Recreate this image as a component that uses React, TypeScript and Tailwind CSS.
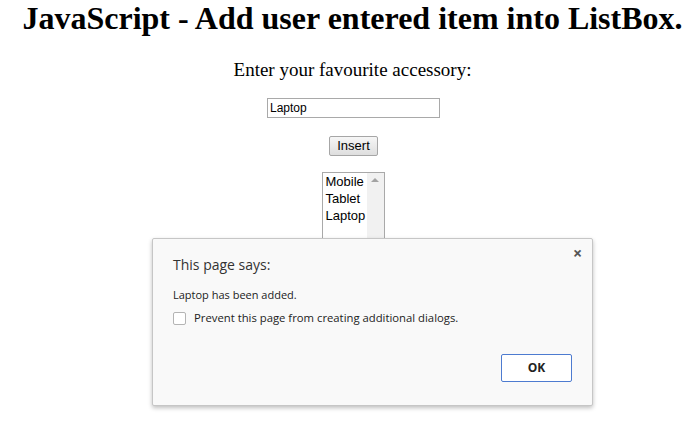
import React from "react";

export default function App() {
  return (
    <div className="relative w-[691px] h-[423px] bg-white overflow-hidden">
      <div className="flex flex-col items-center pl-[14px]">
        <h1
          className="mt-[2px] h-[32px] leading-[32px] text-[32px] font-bold text-black whitespace-nowrap"
          style={{ fontFamily: '"Liberation Serif", "Times New Roman", serif' }}
        >
          JavaScript - Add user entered item into ListBox.
        </h1>
        <p
          className="mt-[25px] h-[22px] leading-[22px] text-[19px] text-black whitespace-nowrap"
          style={{ fontFamily: '"Liberation Serif", "Times New Roman", serif' }}
        >
          Enter your favourite accessory:
        </p>
        <div
          className="mt-[17px] ml-[2px] w-[173px] h-[20px] border border-[#a9a9a9] bg-white px-[2px] text-[12px] leading-[18px] text-black"
          style={{ fontFamily: '"Liberation Sans", Arial, sans-serif' }}
        >
          Laptop
        </div>
        <div
          className="mt-[18px] ml-[2px] w-[49px] h-[20px] border border-[#a6a6a6] rounded-[2px] bg-gradient-to-b from-[#f6f6f6] to-[#dedede] text-center text-[13px] leading-[18px] text-black"
          style={{ fontFamily: '"Liberation Sans", Arial, sans-serif' }}
        >
          Insert
        </div>
        <div
          className="mt-[16px] ml-[1px] w-[63px] h-[72px] border border-[#a9a9a9] bg-white flex"
          style={{ fontFamily: '"Liberation Sans", Arial, sans-serif' }}
        >
          <div className="flex-1 pl-[3px] text-[13px] leading-[17px] text-black">
            <div>Mobile</div>
            <div>Tablet</div>
            <div>Laptop</div>
          </div>
          <div className="w-[17px] bg-[#f1f1f1] flex justify-center pt-[5px]">
            <div className="w-0 h-0 border-l-[4px] border-r-[4px] border-b-[4px] border-l-transparent border-r-transparent border-b-[#a3a3a3]" />
          </div>
        </div>
      </div>

      <div
        className="absolute left-[152px] top-[238px] w-[441px] h-[168px] bg-[#f9f9f9] border border-[#c6c6c6] rounded-[2px] shadow-[0_2px_4px_rgba(0,0,0,0.25)]"
        style={{ fontFamily: '"Open Sans", "Noto Sans", sans-serif' }}
      >
        <div className="absolute left-[420px] top-[6px] text-[16px] leading-[16px] font-bold text-[#555]">×</div>
        <div className="flex flex-col pl-[20px] pt-[16px]">
          <div className="text-[14px] leading-[20px] text-[#333]">This page says:</div>
          <div className="mt-[12px] text-[11px] leading-[16px] text-[#222]">Laptop has been added.</div>
          <div className="mt-[7px] flex items-center">
            <div className="w-[13px] h-[13px] border border-[#b4b4b4] rounded-[2px] bg-white" />
            <div className="ml-[8px] text-[11.3px] leading-[16px] text-[#222]">
              Prevent this page from creating additional dialogs.
            </div>
          </div>
        </div>
        <div className="absolute left-[348px] top-[115px] w-[71px] h-[28px] border border-[#4d7bd0] rounded-[2px] bg-white flex items-center justify-center text-[12px] font-bold text-[#222]">
          OK
        </div>
      </div>
    </div>
  );
}
